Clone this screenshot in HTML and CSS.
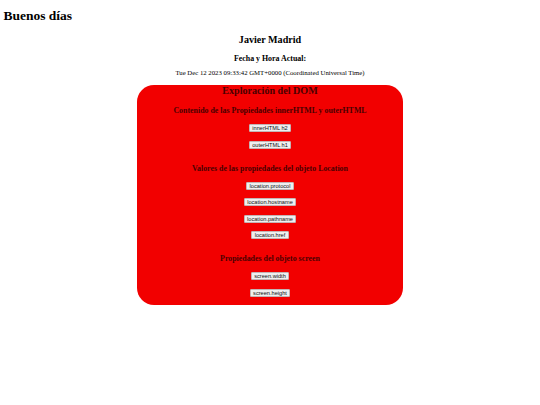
FILE: index.html
```html
<!DOCTYPE html>
<html lang="es">
<head>
<meta charset="utf-8">
<title>Exploración del DOM</title>
<link rel="stylesheet" href="styles.css">
</head>
<body>
<div class="page">
  <h1 class="greeting">Buenos días</h1>
  <h2 class="name">Javier Madrid</h2>
  <h3 class="date-label">Fecha y Hora Actual:</h3>
  <p class="date">Tue Dec 12 2023 09:33:42 GMT+0000 (Coordinated Universal Time)</p>

  <div class="box">
    <h2 class="box-title">Exploración del DOM</h2>
    <div class="sections">
      <section class="section">
        <h3 class="section-title">Contenido de las Propiedades innerHTML y outerHTML</h3>
        <div class="btns">
          <button class="btn">innerHTML h2</button>
          <button class="btn">outerHTML h1</button>
        </div>
      </section>
      <section class="section">
        <h3 class="section-title">Valores de las propiedades del objeto Location</h3>
        <div class="btns">
          <button class="btn">location.protocol</button>
          <button class="btn">location.hostname</button>
          <button class="btn">location.pathname</button>
          <button class="btn">location.href</button>
        </div>
      </section>
      <section class="section">
        <h3 class="section-title">Propiedades del objeto screen</h3>
        <div class="btns">
          <button class="btn">screen.width</button>
          <button class="btn">screen.height</button>
        </div>
      </section>
    </div>
  </div>
</div>
</body>
</html>
```

FILE: styles.css
```css
html, body {
  margin: 0;
  padding: 0;
  background: #ffffff;
}

body {
  font-family: "Liberation Serif", "Times New Roman", serif;
  color: #000000;
}

.page {
  padding: 0 3.4px;
  text-align: center;
}

.greeting {
  text-align: left;
  font-size: 13.5px;
  line-height: 16px;
  font-weight: bold;
  margin: 8.1px 0 0;
}

.name {
  font-size: 10.1px;
  line-height: 12px;
  font-weight: bold;
  margin: 10px 0 0;
}

.date-label {
  font-size: 7.9px;
  line-height: 9px;
  font-weight: bold;
  margin: 7.7px 0 0;
}

.date {
  font-size: 6.75px;
  line-height: 8px;
  margin: 6.6px 0 0;
}

.box {
  width: 266px;
  margin: 7.6px auto 0;
  background: #f20000;
  border-radius: 17px;
  padding: 0 0 7.7px;
  display: flex;
  flex-direction: column;
  align-items: center;
  color: #4a0000;
}

.box-title {
  font-size: 10.1px;
  line-height: 12px;
  font-weight: bold;
  margin: 0;
}

.sections {
  display: flex;
  flex-direction: column;
  gap: 15px;
  margin-top: 9px;
  width: 100%;
}

.section {
  display: flex;
  flex-direction: column;
  align-items: center;
  gap: 9px;
}

.section-title {
  font-size: 7.9px;
  line-height: 9px;
  font-weight: bold;
  margin: 0;
}

.btns {
  display: flex;
  flex-direction: column;
  align-items: center;
  gap: 8.6px;
}

.btn {
  font-family: "Liberation Sans", Arial, sans-serif;
  font-size: 5.63px;
  line-height: 6px;
  height: 8px;
  padding: 0 2.4px;
  margin: 0;
  color: #111111;
  background: #efefef;
  border: 1px solid #c4b4b4;
  border-radius: 1px;
}
```
